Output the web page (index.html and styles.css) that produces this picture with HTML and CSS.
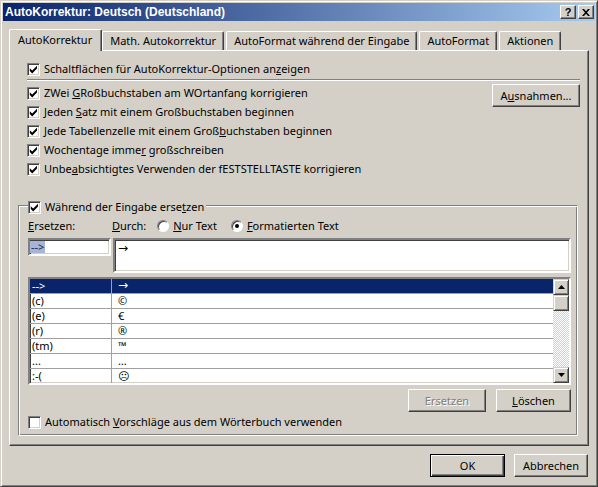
FILE: index.html
```html
<!DOCTYPE html>
<html lang="de">
<head>
<meta charset="utf-8">
<title>AutoKorrektur: Deutsch (Deutschland)</title>
<link rel="stylesheet" href="styles.css">
</head>
<body>
<div class="window">
  <div class="titlebar">
    <span class="title">AutoKorrektur: Deutsch (Deutschland)</span>
    <span class="cbtn help">?</span>
    <span class="cbtn close"><svg width="8" height="7" viewBox="0 0 8 7"><path d="M0 0h2l2 2.2L6 0h2L5 3.5 8 7H6L4 4.8 2 7H0l3-3.5z" fill="#000"/></svg></span>
  </div>
  <div class="content">
    <div class="tabs">
      <div class="tab active">AutoKorrektur</div>
      <div class="tab">Math. Autokorrektur</div>
      <div class="tab">AutoFormat während der Eingabe</div>
      <div class="tab">AutoFormat</div>
      <div class="tab">Aktionen</div>
    </div>
    <div class="panel">
      <div class="top">
        <div class="cb-row"><span class="cb on"></span><span class="txt">Schaltflächen für AutoKorrektur-Optionen an<u>z</u>eigen</span></div>
        <div class="sep"></div>
        <div class="opts">
          <div class="opt-list">
            <div class="cb-row"><span class="cb on"></span><span class="txt">ZWei <u>G</u>Roßbuchstaben am WOrtanfang korrigieren</span></div>
            <div class="cb-row"><span class="cb on"></span><span class="txt">Jeden <u>S</u>atz mit einem Großbuchstaben beginnen</span></div>
            <div class="cb-row"><span class="cb on"></span><span class="txt">Jede Tabellenzelle mit einem Groß<u>b</u>uchstaben beginnen</span></div>
            <div class="cb-row"><span class="cb on"></span><span class="txt">Wochentage imme<u>r</u> großschreiben</span></div>
            <div class="cb-row"><span class="cb on"></span><span class="txt">Unbe<u>a</u>bsichtigtes Verwenden der fESTSTELLTASTE korrigieren</span></div>
          </div>
          <button class="btn exc">A<u>u</u>snahmen...</button>
        </div>
      </div>
      <div class="group">
        <div class="group-head"><span class="cb on"></span><span class="txt">Während der Eingabe erse<u>t</u>zen</span></div>
        <div class="labels">
          <span class="lbl-ers txt"><u>E</u>rsetzen:</span>
          <span class="lbl-durch txt"><u>D</u>urch:</span>
          <span class="radio"></span><span class="rlabel txt"><u>N</u>ur Text</span>
          <span class="radio on"></span><span class="rlabel txt"><u>F</u>ormatierten Text</span>
        </div>
        <div class="inputs">
          <div class="field ers"><span class="selected">--&gt;</span></div>
          <div class="field durch"><span class="arrow">→</span></div>
        </div>
        <div class="list">
          <div class="rows">
            <div class="row sel"><span class="c1">--&gt;</span><span class="c2 arrow">→</span></div>
            <div class="row"><span class="c1">(c)</span><span class="c2">©</span></div>
            <div class="row"><span class="c1">(e)</span><span class="c2">€</span></div>
            <div class="row"><span class="c1">(r)</span><span class="c2">®</span></div>
            <div class="row"><span class="c1">(tm)</span><span class="c2">™</span></div>
            <div class="row"><span class="c1">...</span><span class="c2">…</span></div>
            <div class="row"><span class="c1">:-(</span><span class="c2">☹</span></div>
          </div>
          <div class="vscroll">
            <div class="sb-btn"><svg width="7" height="4" viewBox="0 0 7 4"><path d="M3.5 0L7 4H0z" fill="#000"/></svg></div>
            <div class="sb-thumb"></div>
            <div class="sb-track"></div>
            <div class="sb-btn"><svg width="7" height="4" viewBox="0 0 7 4"><path d="M0 0h7L3.5 4z" fill="#000"/></svg></div>
          </div>
        </div>
        <div class="actions">
          <button class="btn disabled w-ers">Ersetzen</button>
          <button class="btn w-del"><u>L</u>öschen</button>
        </div>
        <div class="cb-row last"><span class="cb"></span><span class="txt">Automatisch <u>V</u>orschläge aus dem Wörterbuch verwenden</span></div>
      </div>
    </div>
    <div class="footer">
      <button class="btn default w-ok">OK</button>
      <button class="btn w-cancel">Abbrechen</button>
    </div>
  </div>
</div>
</body>
</html>
```

FILE: styles.css
```css
* { box-sizing: border-box; }
html, body { margin: 0; padding: 0; }
body {
  width: 598px;
  height: 487px;
  overflow: hidden;
  background: #d4d0c8;
  font-family: "Noto Sans", "Open Sans", "DejaVu Sans", sans-serif;
  font-size: 11px;
  color: #000;
}
u { text-decoration: underline; text-underline-offset: 1px; }

.window {
  width: 598px;
  height: 487px;
  border: 1px solid;
  border-color: #d4d0c8 #404040 #404040 #d4d0c8;
  box-shadow: inset 1px 1px #fff, inset -1px -1px #808080;
  padding: 2px;
  display: flex;
  flex-direction: column;
}

.titlebar {
  height: 18px;
  flex: none;
  background: linear-gradient(to right, #0a246a, #a6caf0);
  display: flex;
  align-items: center;
  padding: 0 1px 0 2px;
}
.title {
  flex: 1;
  color: #fff;
  font-family: "Liberation Sans", Arial, sans-serif;
  font-weight: bold;
  font-size: 12px;
}
.cbtn {
  width: 16px;
  height: 14px;
  background: #d4d0c8;
  border: 1px solid;
  border-color: #fff #404040 #404040 #fff;
  box-shadow: inset -1px -1px #808080;
  display: flex;
  align-items: center;
  justify-content: center;
  font-family: "Liberation Sans", Arial, sans-serif;
  font-weight: bold;
  font-size: 11px;
  line-height: 1;
}
.cbtn.close { margin-left: 2px; }

.content {
  flex: 1;
  padding: 8px 6px 0 6px;
  display: flex;
  flex-direction: column;
}

.tabs {
  display: flex;
  align-items: flex-end;
  height: 21px;
}
.tab {
  height: 19px;
  padding: 0 7px 1px;
  margin-right: 2px;
  border: 1px solid;
  border-bottom: none;
  border-color: #fff #404040 #fff #fff;
  box-shadow: inset -1px 0 #808080;
  border-radius: 2px 2px 0 0;
  display: flex;
  align-items: center;
  white-space: nowrap;
}
.tab.active {
  height: 22px;
  padding: 0 9px 2px 8px;
  margin-right: 0;
  margin-bottom: -1px;
  background: #d4d0c8;
  position: relative;
  z-index: 1;
}

.panel {
  width: 580px;
  height: 396px;
  flex: none;
  border: 1px solid;
  border-color: #fff #404040 #404040 #fff;
  box-shadow: inset -1px -1px #808080;
  padding: 9px 8px 0 8px;
}

.top { padding-left: 9px; }
.cb-row {
  height: 19px;
  display: flex;
  align-items: center;
  white-space: nowrap;
}
.txt { padding-bottom: 2px; }
.cb-row.last { margin-top: 1px; }
.cb {
  width: 13px;
  height: 13px;
  flex: none;
  margin-right: 4px;
  background: #fff;
  border: 1px solid;
  border-color: #808080 #fff #fff #808080;
  box-shadow: inset 1px 1px #404040, inset -1px -1px #d4d0c8;
}
.cb.on {
  background: #fff url("data:image/svg+xml;utf8,<svg xmlns='http://www.w3.org/2000/svg' width='11' height='11' viewBox='0 0 11 11'><path d='M1.8 4.2L4.2 6.6L9 1.8V4.6L4.2 9.4L1.8 7Z' fill='black'/></svg>") no-repeat 0 0;
}
.sep {
  height: 2px;
  border-top: 1px solid #808080;
  border-bottom: 1px solid #fff;
  margin: 0 0 3px 0;
}
.opts {
  display: flex;
  justify-content: space-between;
  align-items: flex-start;
}

.btn {
  font: inherit;
  color: #000;
  background: #d4d0c8;
  border: 1px solid;
  border-color: #fff #404040 #404040 #fff;
  box-shadow: inset -1px -1px #808080;
  height: 23px;
  padding: 0 0 1px;
  display: flex;
  align-items: center;
  justify-content: center;
}
.btn.exc { width: 88px; }
.btn.disabled { color: #808080; text-shadow: 1px 1px #fff; }
.btn.default {
  border-color: #000;
  box-shadow: inset 1px 1px #fff, inset -1px -1px #404040, inset -2px -2px #808080;
}
.w-ers { width: 78px; }
.w-del { width: 75px; }
.w-ok { width: 75px; }
.w-cancel { width: 74px; }

.group {
  margin-top: 26px;
  width: 560px;
  border: 1px solid;
  border-color: #808080 #fff #fff #808080;
  box-shadow: inset 1px 1px #fff, inset -1px -1px #808080;
  padding: 0 6px 3px 9px;
}
.group-head {
  display: flex;
  align-items: center;
  width: fit-content;
  height: 13px;
  margin-top: -5px;
  padding-right: 2px;
  background: #d4d0c8;
  white-space: nowrap;
}
.labels {
  display: flex;
  align-items: center;
  height: 14px;
  margin-top: 5px;
  white-space: nowrap;
}
.lbl-ers { width: 84px; }
.lbl-durch { margin-right: 11px; }
.radio {
  width: 12px;
  height: 12px;
  flex: none;
  border-radius: 50%;
  background: #fff;
  border: 1px solid;
  border-color: #808080 #fff #fff #808080;
  box-shadow: inset 1px 1px #404040;
  margin-right: 4px;
  display: flex;
  align-items: center;
  justify-content: center;
}
.radio.on::after {
  content: "";
  width: 4px;
  height: 4px;
  border-radius: 50%;
  background: #000;
}
.rlabel { margin-right: 14px; }

.inputs {
  display: flex;
  align-items: flex-start;
  margin-top: 5px;
}
.field {
  background: #fff;
  border: 2px solid;
  border-color: #808080 #fff #fff #808080;
  box-shadow: inset 1px 1px #404040, inset -1px -1px #d4d0c8;
}
.field.ers {
  width: 83px;
  height: 18px;
  margin-right: 2px;
  display: flex;
  align-items: center;
}
.selected {
  background: #a6b5d7;
  color: #1a2550;
  line-height: 11px;
  padding: 0 1px 1px 1px;
}
.field.durch {
  flex: 1;
  height: 35px;
  padding: 1px 3px 0;
  line-height: 14px;
}
.arrow {
  font-family: "DejaVu Sans", sans-serif;
  font-size: 12px;
}

.list {
  margin-top: 4px;
  height: 108px;
  display: flex;
  background: #fff;
  border: 2px solid;
  border-color: #808080 #fff #fff #808080;
  box-shadow: inset 1px 1px #404040, inset -1px -1px #d4d0c8;
  overflow: hidden;
}
.rows {
  flex: 1;
  overflow: hidden;
}
.row {
  height: 15px;
  display: flex;
  border-bottom: 1px solid #a0a0a0;
  line-height: 13px;
}
.row.sel { background: #0a246a; color: #fff; }
.c1 {
  width: 82px;
  flex: none;
  padding-left: 2px;
  border-right: 1px solid #a0a0a0;
}
.c2 { padding-left: 6px; }

.vscroll {
  width: 16px;
  flex: none;
  display: flex;
  flex-direction: column;
}
.sb-btn, .sb-thumb {
  height: 16px;
  flex: none;
  background: #d4d0c8;
  border: 1px solid;
  border-color: #d4d0c8 #404040 #404040 #d4d0c8;
  box-shadow: inset 1px 1px #fff, inset -1px -1px #808080;
  display: flex;
  align-items: center;
  justify-content: center;
}
.sb-track {
  flex: 1;
  background-color: #fff;
  background-image: conic-gradient(#d4d0c8 25%, #fff 0 50%, #d4d0c8 0 75%, #fff 0);
  background-size: 2px 2px;
}

.actions {
  display: flex;
  justify-content: flex-end;
  gap: 10px;
  margin-top: 4px;
}

.footer {
  display: flex;
  justify-content: flex-end;
  gap: 9px;
  margin-top: 8px;
  padding-right: 1px;
}
```
